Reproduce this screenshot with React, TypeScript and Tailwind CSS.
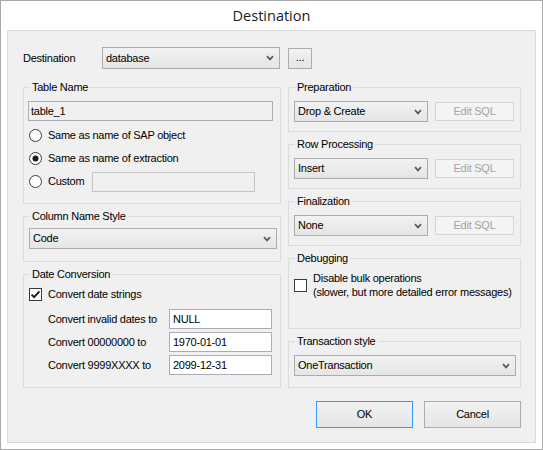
import React from "react";

const Chevron = () => (
  <svg width="8" height="6" viewBox="0 0 8 6" className="shrink-0">
    <path d="M1 1.2 L4 4.4 L7 1.2" fill="none" stroke="#5a5a5a" strokeWidth="1.7" />
  </svg>
);

function Select({ value, className }: { value: string; className: string }) {
  return (
    <div
      className={`flex items-center justify-between border border-[#acacac] bg-linear-to-b from-[#f2f2f2] to-[#e5e5e5] pl-[3px] pr-[5px] ${className}`}
    >
      <span className="leading-none">{value}</span>
      <Chevron />
    </div>
  );
}

function Group({
  label,
  className,
  children,
}: {
  label: string;
  className: string;
  children?: React.ReactNode;
}) {
  return (
    <div className={`relative border border-[#dcdcdc] ${className}`}>
      <span className="absolute -top-[7px] left-[6px] bg-[#f0f0f0] px-[2px] leading-[13px]">
        {label}
      </span>
      {children}
    </div>
  );
}

function Radio({ checked }: { checked?: boolean }) {
  return (
    <svg width="13" height="13" viewBox="0 0 13 13" className="shrink-0">
      <circle cx="6.5" cy="6.5" r="6" fill="#ffffff" stroke="#3c3c3c" strokeWidth="1" />
      {checked && <circle cx="6.5" cy="6.5" r="3" fill="#1a1a1a" />}
    </svg>
  );
}

function Checkbox({ checked }: { checked?: boolean }) {
  return (
    <svg width="13" height="13" viewBox="0 0 13 13" className="shrink-0">
      <rect x="0.5" y="0.5" width="12" height="12" fill="#ffffff" stroke="#3c3c3c" strokeWidth="1" />
      {checked && (
        <path d="M2.6 6.6 L5.1 9.2 L10.4 3.4" fill="none" stroke="#1a1a1a" strokeWidth="1.9" />
      )}
    </svg>
  );
}

function EditSql() {
  return (
    <div className="ml-[7px] flex h-[19px] w-[79px] items-center justify-center border border-[#d5d5d5] bg-[#f4f4f4] text-[#a3a3a3]">
      Edit SQL
    </div>
  );
}

function TextBox({ value, className }: { value: string; className: string }) {
  return (
    <div className={`flex items-center border border-[#abadb3] bg-white pl-[3px] ${className}`}>
      {value}
    </div>
  );
}

export default function App() {
  return (
    <div className="h-[450px] w-[543px] border border-[#a9a9a9] bg-white font-['Liberation_Sans',Arial,sans-serif] text-[11px] tracking-[-0.25px] text-black">
      <div className="flex h-[29px] items-center justify-center font-['Open_Sans','Liberation_Sans',sans-serif] text-[14.5px] tracking-normal text-[#1c1c1c]">
        Destination
      </div>
      <div className="mx-[6px] flex h-[413px] flex-col border border-[#dadada] bg-[#f0f0f0] pb-[14px] pl-[15px] pr-[14px] pt-[16px]">
        {/* Destination row */}
        <div className="flex h-[22px] items-start">
          <div className="flex h-[22px] w-[79px] items-center">Destination</div>
          <Select value="database" className="h-[22px] w-[178px]" />
          <div className="ml-[8px] mt-[1px] flex h-[21px] w-[24px] items-center justify-center border border-[#acacac] bg-linear-to-b from-[#f2f2f2] to-[#e5e5e5] pb-[3px]">
            ...
          </div>
        </div>

        <div className="mt-[18px] flex gap-[7px]">
          {/* Left column */}
          <div className="flex w-[258px] flex-col">
            <Group label="Table Name" className="h-[117px]">
              <div className="ml-[4px] mt-[13px] flex h-[20px] w-[245px] items-center border border-[#abadb3] bg-[#f0f0f0] pl-[2px]">
                table_1
              </div>
              <div className="mt-[3px] flex h-[23px] items-center pl-[5px]">
                <Radio />
                <span className="ml-[6px]">Same as name of SAP object</span>
              </div>
              <div className="flex h-[23px] items-center pl-[5px]">
                <Radio checked />
                <span className="ml-[6px]">Same as name of extraction</span>
              </div>
              <div className="flex h-[23px] items-center pl-[5px]">
                <Radio />
                <span className="ml-[6px] w-[44px]">Custom</span>
                <div className="h-[20px] w-[163px] border border-[#c4c4c4] bg-[#f0f0f0]" />
              </div>
            </Group>

            <Group label="Column Name Style" className="mt-[12px] h-[46px]">
              <Select value="Code" className="ml-[5px] mt-[11px] h-[21px] w-[248px]" />
            </Group>

            <Group label="Date Conversion" className="mt-[12px] h-[114px]">
              <div className="mt-[13px] flex h-[13px] items-center pl-[5px]">
                <Checkbox checked />
                <span className="ml-[6px]">Convert date strings</span>
              </div>
              <div className="mt-[8px] flex flex-col gap-[3px] pl-[24px]">
                <div className="flex h-[20px] items-center">
                  <span className="w-[121px]">Convert invalid dates to</span>
                  <TextBox value="NULL" className="h-[20px] w-[103px]" />
                </div>
                <div className="flex h-[20px] items-center">
                  <span className="w-[121px]">Convert 00000000 to</span>
                  <TextBox value="1970-01-01" className="h-[20px] w-[103px]" />
                </div>
                <div className="flex h-[20px] items-center">
                  <span className="w-[121px]">Convert 9999XXXX to</span>
                  <TextBox value="2099-12-31" className="h-[20px] w-[103px]" />
                </div>
              </div>
            </Group>
          </div>

          {/* Right column */}
          <div className="flex w-[233px] flex-col">
            <Group label="Preparation" className="h-[45px]">
              <div className="ml-[5px] mt-[13px] flex items-center">
                <Select value="Drop & Create" className="h-[21px] w-[134px]" />
                <EditSql />
              </div>
            </Group>
            <Group label="Row Processing" className="mt-[12px] h-[45px]">
              <div className="ml-[5px] mt-[13px] flex items-center">
                <Select value="Insert" className="h-[21px] w-[134px]" />
                <EditSql />
              </div>
            </Group>
            <Group label="Finalization" className="mt-[12px] h-[45px]">
              <div className="ml-[5px] mt-[13px] flex items-center">
                <Select value="None" className="h-[21px] w-[134px]" />
                <EditSql />
              </div>
            </Group>
            <Group label="Debugging" className="mt-[12px] h-[71px]">
              <div className="mt-[12px] flex items-center pl-[5px]">
                <Checkbox />
                <div className="ml-[6px] leading-[14px]">
                  <div>Disable bulk operations</div>
                  <div>(slower, but more detailed error messages)</div>
                </div>
              </div>
            </Group>
            <Group label="Transaction style" className="mt-[12px] h-[47px]">
              <Select value="OneTransaction" className="ml-[5px] mt-[13px] h-[21px] w-[222px]" />
            </Group>
          </div>
        </div>

        {/* Buttons */}
        <div className="mt-[13px] flex justify-end gap-[11px]">
          <div className="flex h-[27px] w-[97px] items-center justify-center border border-[#3399ff] bg-linear-to-b from-[#f2f2f2] to-[#e5e5e5]">
            OK
          </div>
          <div className="flex h-[27px] w-[97px] items-center justify-center border border-[#acacac] bg-linear-to-b from-[#f2f2f2] to-[#e5e5e5]">
            Cancel
          </div>
        </div>
      </div>
    </div>
  );
}
